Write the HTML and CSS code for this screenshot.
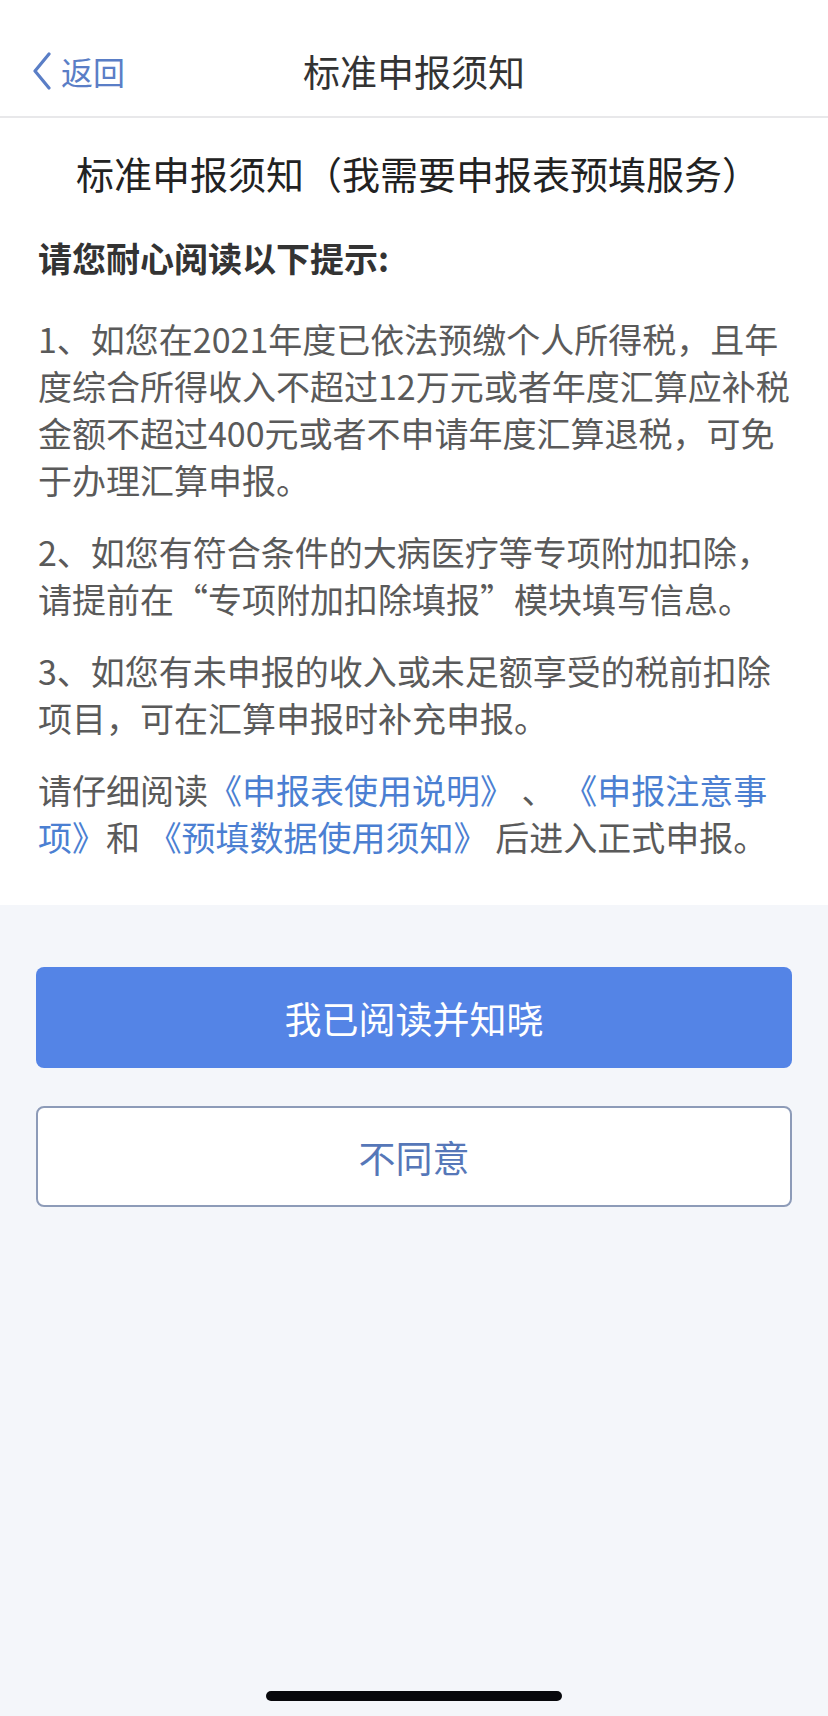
FILE: index.html
```html
<!DOCTYPE html>
<html lang="zh-CN">
<head>
<meta charset="utf-8">
<title>标准申报须知</title>
<link rel="stylesheet" href="styles.css">
</head>
<body>
<div class="page">
  <header class="nav">
    <a class="back">
      <svg class="chev" width="20" height="38" viewBox="0 0 20 38"><path d="M17 2 L3 19 L17 36" fill="none" stroke="currentColor" stroke-width="3.2" stroke-linecap="round" stroke-linejoin="round"/></svg>
      <span class="back-text">返回</span>
    </a>
    <h1 class="nav-title">标准申报须知</h1>
  </header>
  <main class="content">
    <h2 class="subtitle">标准申报须知（我需要申报表预填服务）</h2>
    <p class="lead">请您耐心阅读以下提示:</p>
    <p class="para">1、如您在2021年度已依法预缴个人所得税，且年度综合所得收入不超过12万元或者年度汇算应补税金额不超过400元或者不申请年度汇算退税，可免于办理汇算申报。</p>
    <p class="para">2、如您有符合条件的大病医疗等专项附加扣除，请提前在“专项附加扣除填报”模块填写信息。</p>
    <p class="para">3、如您有未申报的收入或未足额享受的税前扣除项目，可在汇算申报时补充申报。</p>
    <p class="para">请仔细阅读<span class="link">《申报表使用说明》</span> 、 <span class="link">《申报注意事项》</span>和 <span class="link">《预填数据使用须知》</span> 后进入正式申报。</p>
  </main>
  <section class="actions">
    <button class="btn btn-primary">我已阅读并知晓</button>
    <button class="btn btn-secondary">不同意</button>
  </section>
  <div class="home-bar"></div>
</div>
</body>
</html>
```
FILE: styles.css
```css
* { box-sizing: border-box; }
html, body { margin: 0; padding: 0; }
body {
  font-family: "Noto Sans CJK SC", "Noto Sans", sans-serif;
  background: #f4f6fa;
  text-spacing-trim: space-all;
}
.page {
  width: 828px;
  min-height: 1716px;
  display: flex;
  flex-direction: column;
  background: #f4f6fa;
}
.nav {
  position: relative;
  height: 118px;
  padding-top: 26px;
  background: #fff;
  border-bottom: 2px solid #e8e8ea;
  display: flex;
  align-items: center;
  justify-content: center;
}
.back {
  position: absolute;
  left: 32px;
  top: 26px;
  height: 90px;
  display: flex;
  align-items: center;
  gap: 9px;
  color: #5a7ec6;
}
.chev { display: block; }
.back-text {
  font-size: 32px;
  line-height: 1;
}
.nav-title {
  margin: 0;
  font-size: 37px;
  font-weight: 400;
  color: #333;
  line-height: 1;
}
.content {
  background: #fff;
  padding: 30px 30px 45px 38px;
}
.subtitle {
  margin: 0 0 36px;
  font-size: 38px;
  font-weight: 400;
  line-height: 50px;
  color: #222;
  text-align: center;
}
.lead {
  margin: 0 0 34px;
  font-size: 34px;
  font-weight: 700;
  line-height: 47px;
  color: #333;
}
.para {
  margin: 0 0 25px;
  font-size: 34px;
  line-height: 47px;
  color: #5a5a5a;
}
.para:last-child { margin-bottom: 0; }
.link { color: #4b7fd2; }
.actions {
  padding: 62px 36px 0;
  display: flex;
  flex-direction: column;
  gap: 38px;
}
.btn {
  height: 101px;
  border-radius: 8px;
  font-family: inherit;
  font-size: 37px;
  width: 100%;
}
.btn-primary {
  background: #5484e6;
  border: none;
  color: #fff;
}
.btn-secondary {
  background: #fff;
  border: 2px solid #8d9bb8;
  color: #5677b8;
}
.home-bar {
  margin: auto auto 15px;
  width: 296px;
  height: 10px;
  border-radius: 5px;
  background: #08080c;
}
```
